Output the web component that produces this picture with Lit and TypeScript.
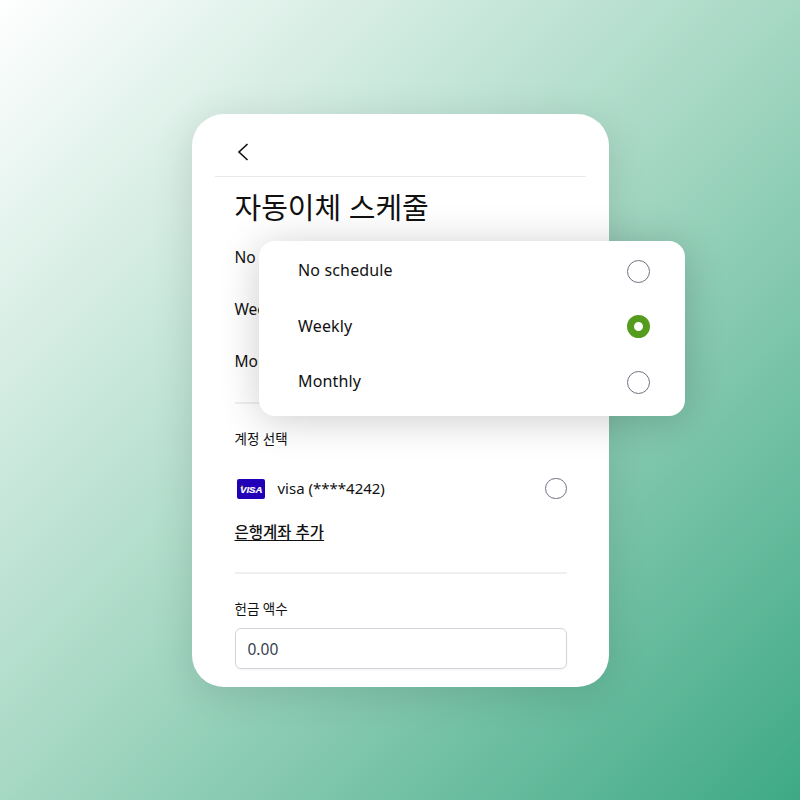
import { LitElement, html, css } from "lit";
import { customElement } from "lit/decorators.js";

const options = ["No schedule", "Weekly", "Monthly"];

@customElement("app-root")
export class AppRoot extends LitElement {
  static styles = css`
    :host {
      display: flex;
      align-items: center;
      justify-content: center;
      width: 800px;
      height: 800px;
      background: linear-gradient(135deg, #ffffff 0%, #a6d8c4 50%, #3ea985 100%);
      font-family: "Noto Sans", "Noto Sans CJK KR", sans-serif;
      color: #111;
    }
    .card {
      position: relative;
      box-sizing: border-box;
      width: 417px;
      height: 573px;
      background: #fff;
      border-radius: 32px;
      padding: 0 23px;
      box-shadow: 0 8px 40px rgba(0, 0, 0, 0.12);
    }
    .header {
      display: flex;
      align-items: center;
      height: 63px;
      padding-left: 22px;
      border-bottom: 1px solid #e9eaee;
      box-sizing: border-box;
      padding-top: 14px;
    }
    .body {
      padding: 0 19px 0 20px;
    }
    h1 {
      margin: 0;
      padding-top: 7px;
      font-size: 29px;
      font-weight: 400;
      line-height: 47px;
    }
    .rows {
      display: flex;
      flex-direction: column;
      padding-bottom: 15px;
      border-bottom: 2px solid #eeeff1;
    }
    .row {
      height: 52px;
      display: flex;
      align-items: center;
      font-size: 15.5px;
    }
    .label {
      font-size: 13.5px;
      line-height: 20px;
    }
    .accounts { padding-top: 25px; }
    .visa-row {
      display: flex;
      align-items: center;
      margin-top: 27px;
      height: 24px;
      font-size: 15px;
    }
    .visa {
      width: 28px;
      height: 20px;
      flex: none;
      margin: 2px 13px 0 2px;
    }
    .radio {
      box-sizing: border-box;
      width: 23px;
      height: 23px;
      border: 1.3px solid #6b7280;
      border-radius: 50%;
      background: #fff;
      flex: none;
      margin-left: auto;
    }
    .visa-row .radio {
      width: 21.5px;
      height: 21.5px;
      margin-top: 2px;
    }
    .radio.on {
      border: 7px solid #559c1e;
    }
    .add {
      display: inline-block;
      margin-top: 21px;
      font-size: 15.5px;
      font-weight: 500;
      line-height: 22px;
      text-decoration: underline;
      text-underline-offset: 2px;
    }
    .divider {
      height: 2px;
      background: #eeeff1;
      margin-top: 29px;
    }
    .amount { padding-top: 25px; }
    .input {
      box-sizing: border-box;
      height: 41px;
      margin-top: 9px;
      padding: 2px 12px 0;
      display: flex;
      align-items: center;
      border: 1px solid #d1d5db;
      border-radius: 6px;
      box-shadow: 0 1px 2px rgba(0, 0, 0, 0.05);
      font-size: 15.5px;
      color: #374151;
    }
    .popup {
      position: absolute;
      left: 67px;
      top: 127px;
      box-sizing: border-box;
      width: 426px;
      height: 175px;
      padding: 3px 35px 0 39.5px;
      background: #fff;
      border-radius: 16px;
      box-shadow: 0 4px 40px rgba(0, 0, 0, 0.2);
      display: flex;
      flex-direction: column;
    }
    .opt {
      height: 55.5px;
      display: flex;
      align-items: center;
      font-size: 16px;
      letter-spacing: 0.15px;
    }
    .opt-text {
      margin-bottom: 2px;
    }
  `;

  render() {
    return html`
      <div class="card">
        <div class="header">
          <svg width="12" height="20" viewBox="0 0 12 20" fill="none" stroke="#111" stroke-width="1.6">
            <path d="M10.5 2 L2 10 L10.5 18" />
          </svg>
        </div>
        <div class="body">
          <h1>자동이체 스케줄</h1>
          <div class="rows">
            ${options.map((o) => html`<div class="row">${o}</div>`)}
          </div>
          <div class="accounts">
            <div class="label">계정 선택</div>
            <div class="visa-row">
              <svg class="visa" viewBox="0 0 28 20">
                <rect width="28" height="20" rx="2" fill="#2100b8" />
                <path d="M3.6 6.8 L6 6.8 L6.4 9.6 Z" fill="#f0a81e" />
                <text x="14.2" y="14" text-anchor="middle" font-family="'Liberation Sans', sans-serif" font-size="9.6" font-weight="700" font-style="italic" fill="#fff" stroke="#fff" stroke-width="0.2">VISA</text>
              </svg>
              <span>visa (****4242)</span>
              <span class="radio"></span>
            </div>
            <span class="add">은행계좌 추가</span>
          </div>
          <div class="divider"></div>
          <div class="amount">
            <div class="label">헌금 액수</div>
            <div class="input">0.00</div>
          </div>
        </div>
        <div class="popup">
          ${options.map(
            (o, i) => html`<div class="opt">
              <span class="opt-text">${o}</span>
              <span class="radio ${i === 1 ? "on" : ""}"></span>
            </div>`
          )}
        </div>
      </div>
    `;
  }
}
